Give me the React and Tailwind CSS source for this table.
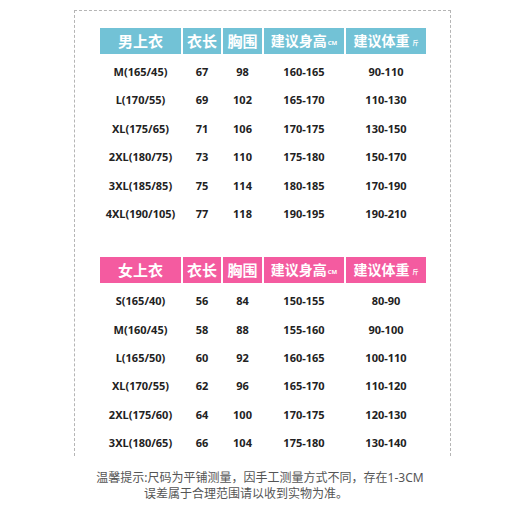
import React from 'react'

const men = [
  ['M(165/45)', '67', '98', '160-165', '90-110'],
  ['L(170/55)', '69', '102', '165-170', '110-130'],
  ['XL(175/65)', '71', '106', '170-175', '130-150'],
  ['2XL(180/75)', '73', '110', '175-180', '150-170'],
  ['3XL(185/85)', '75', '114', '180-185', '170-190'],
  ['4XL(190/105)', '77', '118', '190-195', '190-210'],
]

const women = [
  ['S(165/40)', '56', '84', '150-155', '80-90'],
  ['M(160/45)', '58', '88', '155-160', '90-100'],
  ['L(165/50)', '60', '92', '160-165', '100-110'],
  ['XL(170/55)', '62', '96', '165-170', '110-120'],
  ['2XL(175/60)', '64', '100', '170-175', '120-130'],
  ['3XL(180/65)', '66', '104', '175-180', '130-140'],
]

const cols = 'grid grid-cols-[81px_38px_39px_80px_80px] gap-x-[2px]'

const Table = ({ title, bg, rows }) => (
  <div>
    <div className={`${cols} h-[26px] text-white font-bold text-[15px] leading-none`}>
      <div className={`${bg} flex items-center justify-center`}>{title}</div>
      <div className={`${bg} flex items-center justify-center`}>衣长</div>
      <div className={`${bg} flex items-center justify-center`}>胸围</div>
      <div className={`${bg} flex items-center justify-center text-[14px]`}>
        建议身高<span className="text-[6px] self-end mb-[8px] ml-[1px]">CM</span>
      </div>
      <div className={`${bg} flex items-center justify-center text-[14px]`}>
        建议体重<span className="text-[6px] self-end mb-[8px] ml-[3px]">斤</span>
      </div>
    </div>
    <div className="mt-[4px]">
      {rows.map((r) => (
        <div key={r[0]} className={`${cols} h-[28.4px] items-center text-[11px] font-bold text-[#222]`}>
          {r.map((c, i) => (
            <div key={i} className="text-center">
              {c}
            </div>
          ))}
        </div>
      ))}
    </div>
  </div>
)

const App = () => {
  return (
    <div
      className="w-[520px] h-[520px] bg-white overflow-hidden"
      style={{ fontFamily: '"Noto Sans", "Noto Sans CJK SC", sans-serif' }}
    >
      <div className="ml-[74px] mt-[10px] w-[377px] h-[446px] border-t border-l border-r border-dashed border-[#b5b5b5] pl-[25px] pt-[17px]">
        <Table title="男上衣" bg="bg-[#72c2d6]" rows={men} />
        <div className="h-[29px]" />
        <Table title="女上衣" bg="bg-[#f45ba0]" rows={women} />
      </div>
      <div className="mt-[14px] text-center text-[12px] leading-[16px] text-[#555]">
        <p>温馨提示:尺码为平铺测量，因手工测量方式不同，存在1-3CM</p>
        <p className="pr-[28px]">误差属于合理范围请以收到实物为准。</p>
      </div>
    </div>
  )
}

export default App
